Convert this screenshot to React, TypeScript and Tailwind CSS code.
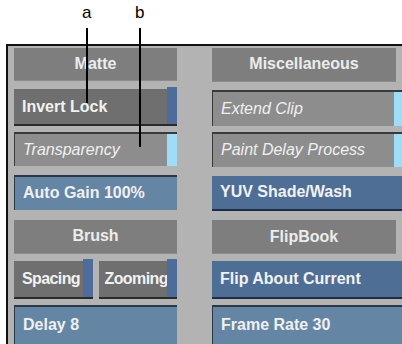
const font = { fontFamily: '"Liberation Sans", Arial, sans-serif' };

function Header({ label, wide }: { label: string; wide?: boolean }) {
  return (
    <div
      className={`h-[34px] ${wide ? "w-[184px]" : "w-full"} bg-[#7e7e7e] border-b border-[#8c8c8c] flex items-center justify-center text-[16px] font-bold text-[#ececec]`}
    >
      {label}
    </div>
  );
}

function Raised({
  label,
  h,
  blue,
  strip,
  className = "",
}: {
  label: string;
  h: string;
  blue?: boolean;
  strip?: boolean;
  className?: string;
}) {
  return (
    <div
      className={`${h} ${className} relative flex items-center pl-2 text-[16px] font-bold text-[#f2f2f2] border-b-2 ${
        blue ? "bg-[#4f6e96] border-[#1e2b48]" : "bg-[#6f6f6f] border-[#2a2a2a]"
      }`}
    >
      <span className="whitespace-nowrap">{label}</span>
      {strip && <div className="absolute right-0 top-[-2px] bottom-0 w-[10px] bg-[#4d6c99]" />}
    </div>
  );
}

function Inset({
  label,
  h,
  blue,
  italic,
  strip,
  className = "",
}: {
  label: string;
  h: string;
  blue?: boolean;
  italic?: boolean;
  strip?: boolean;
  className?: string;
}) {
  return (
    <div
      className={`${h} ${className} relative flex items-center pl-2 text-[16px] text-[#f0f0f0] border-t-2 border-l ${
        blue ? "bg-[#6585a5] border-[#2c3848] font-bold" : "bg-[#8d8d8d] border-[#3a3a3a]"
      } ${italic ? "italic" : ""}`}
    >
      <span className="whitespace-nowrap">{label}</span>
      {strip && <div className="absolute right-0 top-0 bottom-0 w-[10px] bg-[#9fdcf7]" />}
    </div>
  );
}

export default function App() {
  return (
    <div className="relative w-[402px] h-[344px] overflow-hidden bg-white" style={font}>
      <div className="h-[44px]" />
      <div className="ml-[6px] w-[396px] h-[300px] overflow-hidden border-t-2 border-l-2 border-[#111] bg-[#b3b3b3] pl-[6px] pt-[2px] flex gap-[35px]">
        <div className="w-[163px] shrink-0 flex flex-col">
          <Header label="Matte" />
          <Raised label="Invert Lock" h="h-[37px]" strip className="mt-[8px]" />
          <Inset label="Transparency" h="h-[35px]" italic strip className="mt-[6px]" />
          <Inset label="Auto Gain 100%" h="h-[35px]" blue className="mt-[9px] bg-[#5c7b9c]" />
          <div className="mt-[10px]">
            <Header label="Brush" />
          </div>
          <div className="mt-[7px] flex gap-[6px]">
            <Raised label="Spacing" h="h-[38px]" strip className="w-[79px] tracking-[-0.6px]" />
            <Raised label="Zooming" h="h-[38px]" strip className="w-[79px] !pl-[6px] tracking-[-0.6px]" />
          </div>
          <Inset label="Delay 8" h="h-[40px]" blue className="mt-[6px]" />
        </div>
        <div className="w-[192px] shrink-0 flex flex-col">
          <Header label="Miscellaneous" wide />
          <Inset label="Extend Clip" h="h-[37px]" italic strip className="mt-[8px]" />
          <Inset label="Paint Delay Process" h="h-[35px]" italic strip className="mt-[6px]" />
          <Raised label="YUV Shade/Wash" h="h-[36px]" blue className="mt-[9px]" />
          <div className="mt-[9px]">
            <Header label="FlipBook" wide />
          </div>
          <Raised label="Flip About Current" h="h-[38px]" blue className="mt-[7px]" />
          <Inset label="Frame Rate 30" h="h-[40px]" blue className="mt-[6px]" />
        </div>
      </div>

      <span className="absolute left-[82px] top-[3px] text-[17px] leading-[20px] text-black">a</span>
      <div className="absolute left-[86px] top-[28px] w-[2px] h-[75px] bg-black" />
      <span className="absolute left-[135px] top-[3px] text-[17px] leading-[20px] text-black">b</span>
      <div className="absolute left-[139px] top-[28px] w-[2px] h-[119px] bg-black" />
    </div>
  );
}
